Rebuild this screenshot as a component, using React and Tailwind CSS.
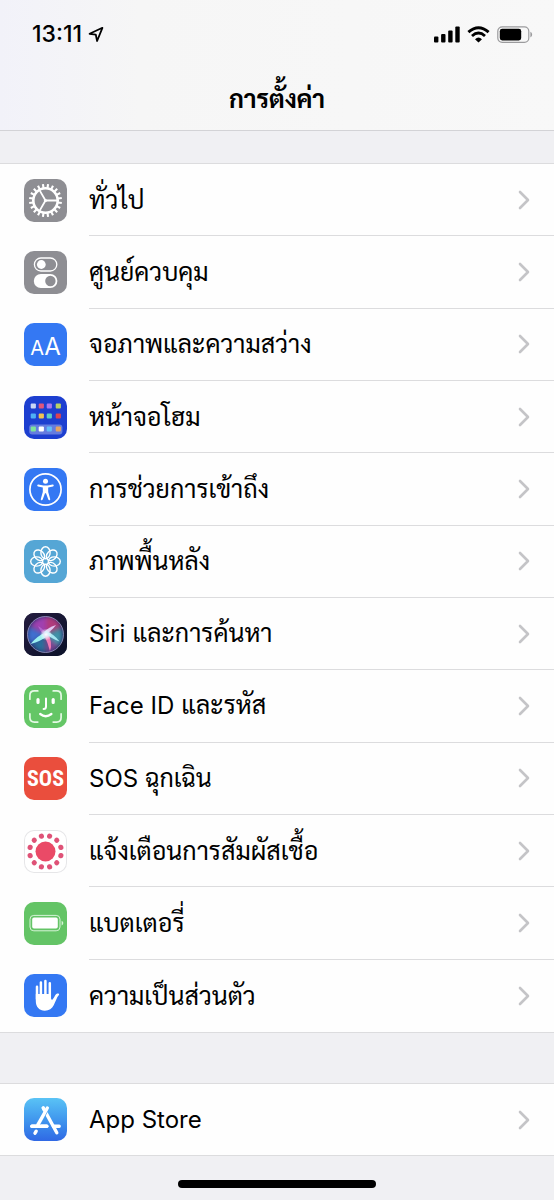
const EIGHT = [0, 45, 90, 135, 180, 225, 270, 315];
const TWELVE = Array.from({ length: 12 }, (_, i) => 15 + i * 30);
const TEETH = Array.from({ length: 20 }, (_, i) => i * 18);
const HOME_APPS = [
  [9, 10, '#c9d5f5'], [17, 10, '#e0567c'], [25, 10, '#a777f0'], [34, 10, '#b9d266'],
  [9, 20, '#4fb0f5'], [17, 20, '#f0c352'], [25, 20, '#5ccdc4'], [34, 20, '#dc4450'],
  [9, 33, '#7fe39a'], [17, 33, '#ffffff'], [25, 33, '#62bdf8'], [34, 33, '#e6a361'],
];

function Glyph({ children }) {
  return (
    <svg viewBox="0 0 43 43" className="size-full" aria-hidden="true" fill="none">
      {children}
    </svg>
  );
}

function GearIcon() {
  return (
    <Glyph>
      <g stroke="#fff" transform="translate(21.5 21.5)">
        <circle r="12.2" strokeWidth="2.6" />
        {TEETH.map((a) => (
          <path key={a} d="M0-12.5V-16.5" strokeWidth="2.1" transform={`rotate(${a + 9})`} />
        ))}
        <path d="M0 0H12M0 0L-6-10.4M0 0L-6 10.4" strokeWidth="1.8" />
        <circle r="1.6" fill="#fff" stroke="none" />
      </g>
    </Glyph>
  );
}

function TogglesIcon() {
  return (
    <Glyph>
      <rect x="10.4" y="7" width="22.4" height="13" rx="6.5" stroke="#fff" strokeWidth="1.3" />
      <circle cx="17.3" cy="13.5" r="4.4" fill="#fff" />
      <rect x="9.8" y="23" width="23.6" height="14" rx="7" fill="#fff" />
      <circle cx="26.4" cy="30" r="5.2" fill="#8e8e93" />
    </Glyph>
  );
}

function HomeScreenIcon() {
  return (
    <Glyph>
      <rect x="5.2" y="28.6" width="33.2" height="10" rx="3" fill="#fff" opacity=".32" />
      {HOME_APPS.map(([x, y, c]) => (
        <rect key={`${x}-${y}`} x={x - 2.3} y={y - 2.6} width="5.2" height="5.2" rx="1" fill={c} />
      ))}
    </Glyph>
  );
}

function AccessibilityIcon() {
  return (
    <Glyph>
      <circle cx="21.5" cy="21.5" r="15.6" stroke="#fff" strokeWidth="1.7" />
      <circle cx="21.5" cy="13.2" r="2.5" fill="#fff" />
      <path
        d="M14.4 16.5l5 .9h4.2l5-.9c1.3-.2 1.6 1.6.4 1.9l-4.8 1.1v4.6l2 6.9c.3 1.3-1.4 1.8-1.9.6l-2.3-6.3h-1l-2.3 6.3c-.5 1.2-2.2.7-1.9-.6l2-6.9v-4.6l-4.8-1.1c-1.2-.3-.9-2.1.4-1.9z"
        fill="#fff"
      />
    </Glyph>
  );
}

function FlowerIcon() {
  return (
    <Glyph>
      <g stroke="#fff" strokeWidth="1.4" transform="translate(21.5 21.5)">
        {EIGHT.map((a) => (
          <ellipse key={a} cy="-8.8" rx="4.6" ry="6" transform={`rotate(${a})`} />
        ))}
      </g>
    </Glyph>
  );
}

function SiriIcon() {
  return (
    <Glyph>
      <defs>
        <linearGradient id="siriBack" x1="0" y1="0" x2="1" y2="1">
          <stop offset="0" stopColor="#241c3f" />
          <stop offset="1" stopColor="#0a1128" />
        </linearGradient>
        <radialGradient id="siriGlow">
          <stop offset="0" stopColor="#fff" />
          <stop offset=".4" stopColor="#e6f2ff" stopOpacity=".85" />
          <stop offset="1" stopColor="#fff" stopOpacity="0" />
        </radialGradient>
        <filter id="siriBlur" x="-50%" y="-50%" width="200%" height="200%">
          <feGaussianBlur stdDeviation="2.2" />
        </filter>
        <filter id="siriSoft" x="-50%" y="-50%" width="200%" height="200%">
          <feGaussianBlur stdDeviation=".5" />
        </filter>
        <clipPath id="siriOrb">
          <circle cx="21.5" cy="21.5" r="18" />
        </clipPath>
      </defs>
      <rect width="43" height="43" fill="url(#siriBack)" />
      <g clipPath="url(#siriOrb)">
        <circle cx="21.5" cy="21.5" r="18" fill="#27306a" />
        <g filter="url(#siriBlur)">
          <path d="M21.5 21L6 13Q14 2 26 4Z" fill="#a03fb0" />
          <path d="M22 21L22 3Q34 4 37 14Z" fill="#b03a7c" />
          <path d="M21 21L5 14Q2 24 6 31Z" fill="#3f6fd0" />
          <path d="M22 22L37 15Q41 26 34 33Z" fill="#3f93a8" />
          <path d="M21 23L8 31Q14 39 21 39Z" fill="#2a6f9c" />
          <path d="M22 23L22 39Q31 39 34 32Z" fill="#7a4590" />
        </g>
        <g filter="url(#siriSoft)">
          <path d="M22 19Q13 23 6.5 31Q17 28 24 23Z" fill="#9cf0f0" />
          <path d="M19.5 21Q24 30 26 38Q29 29 23.5 20Z" fill="#f07ab4" />
          <path d="M20 22Q27 19 32 12Q25 14 20 19Z" fill="#e0c6f2" />
          <path d="M20 19.5Q28 26 35.5 28.5Q30 21 22 18Z" fill="#a5e6f2" />
          <path d="M23 22Q20 16 14 13Q16 18 20 22Z" fill="#c070d8" opacity=".7" />
        </g>
        <circle cx="22" cy="21.5" r="6" fill="url(#siriGlow)" />
      </g>
      <circle cx="21.5" cy="21.5" r="18" stroke="#a9a9d6" strokeOpacity=".8" strokeWidth=".9" />
    </Glyph>
  );
}

function FaceIcon() {
  return (
    <Glyph>
      <g stroke="#fff" strokeLinecap="round" strokeWidth="2">
        <g stroke="#e4f9e5" strokeWidth="1.7">
          <path d="M5.9 14.2V10.4Q5.9 5.9 10.4 5.9H13.8" />
          <path d="M37.1 14.2V10.4Q37.1 5.9 32.6 5.9H29.2" />
          <path d="M5.9 28.8V32.6Q5.9 37.1 10.4 37.1H13.8" />
          <path d="M37.1 28.8V32.6Q37.1 37.1 32.6 37.1H29.2" />
        </g>
        <path d="M14 14.5V17.4M29.2 14.5V17.4" strokeWidth="3.2" />
        <path d="M22 13.6V21.4Q22 23.9 19.6 23.9" />
        <path d="M16.2 29Q21.7 33.4 27.4 29" strokeWidth="2.3" />
      </g>
    </Glyph>
  );
}

function ExposureIcon() {
  return (
    <Glyph>
      <g fill="#ea4a67" transform="translate(21.5 21.5)">
        <circle r="10" />
        {TWELVE.map((a) => (
          <circle key={a} cy="-15.9" r="2.6" fill="#df5277" transform={`rotate(${a})`} />
        ))}
      </g>
    </Glyph>
  );
}

function BatteryIcon() {
  return (
    <Glyph>
      <rect x="6" y="13.4" width="30" height="15.4" rx="3.8" stroke="#d6f4d7" strokeWidth="1" />
      <rect x="8.2" y="15.6" width="25.6" height="11" rx="1.8" fill="#fff" />
      <path d="M37.6 18.8c2.2.8 2.2 3.8 0 4.6z" fill="#d6f4d7" />
    </Glyph>
  );
}

function HandIcon() {
  return (
    <Glyph>
      <path
        d="M13 12.8V25M16.9 8.6V25M21.4 7V25M25.8 9.2V25"
        stroke="#fff"
        strokeWidth="2.5"
        strokeLinecap="round"
      />
      <path
        d="M11.8 20V27C11.8 33 15.4 36.7 20.8 36.7C25.2 36.7 28 34.6 29.7 31.2L32.3 25.4Q33.2 22.9 34.9 21.1C35.7 20 34.4 19.2 33.2 19.6C31.9 20 31.1 21.4 30.3 22.9L28.6 25.6Q27.4 26.2 27 24.4V20Z"
        fill="#fff"
      />
    </Glyph>
  );
}

function StoreIcon() {
  return (
    <Glyph>
      <g stroke="#fff" strokeWidth="3.4" strokeLinecap="round">
        <path d="M19.3 10L32.8 34.8" />
        <path d="M7.8 28.3H22.8M29.4 28.3H35.2" />
        <path d="M12.2 33.2L11 35.2" />
      </g>
      <path d="M23.3 10L13.6 27.4" stroke="#4a9df0" strokeWidth="4.6" />
      <path d="M23.3 10L13.6 27.4" stroke="#fff" strokeWidth="3.4" strokeLinecap="round" />
      <path d="M19.3 10L20.6 12.4" stroke="#fff" strokeWidth="3.4" strokeLinecap="round" />
      <path d="M8 28.3H22.8" stroke="#fff" strokeWidth="3.4" strokeLinecap="round" />
    </Glyph>
  );
}

function TextSizeIcon() {
  return (
    <span className="flex size-full items-baseline justify-center pt-1 leading-10 text-white">
      <span className="text-xl leading-10">A</span>
      <span className="text-2xl leading-10">A</span>
    </span>
  );
}

function SosIcon() {
  return (
    <span className="flex size-full items-center justify-center font-['Roboto_Condensed','Roboto',sans-serif] text-[22px] font-bold text-white">
      SOS
    </span>
  );
}

const MAIN = [
  { thai: 'ทั่วไป', tile: 'bg-[#8e8e93]', Icon: GearIcon },
  { thai: 'ศูนย์ควบคุม', tile: 'bg-[#8e8e93]', Icon: TogglesIcon },
  { thai: 'จอภาพและความสว่าง', tile: 'bg-[#3478f3]', Icon: TextSizeIcon },
  { thai: 'หน้าจอโฮม', tile: 'bg-[#1d3fd0]', Icon: HomeScreenIcon },
  { thai: 'การช่วยการเข้าถึง', tile: 'bg-[#3478f3]', Icon: AccessibilityIcon },
  { thai: 'ภาพพื้นหลัง', tile: 'bg-[#55a6d5]', Icon: FlowerIcon },
  { latin: 'Siri', thai: ' และการค้นหา', tile: 'bg-[#151a35]', Icon: SiriIcon },
  { latin: 'Face ID', thai: ' และรหัส', tile: 'bg-[#64c666]', Icon: FaceIcon },
  { latin: 'SOS', thai: ' ฉุกเฉิน', tile: 'bg-[#ea4e3d]', Icon: SosIcon },
  { thai: 'แจ้งเตือนการสัมผัสเชื้อ', tile: 'bg-white ring-1 ring-inset ring-[#e6e6e8]', Icon: ExposureIcon },
  { thai: 'แบตเตอรี่', tile: 'bg-[#64c466]', Icon: BatteryIcon },
  { thai: 'ความเป็นส่วนตัว', tile: 'bg-[#3478f3]', Icon: HandIcon },
];

const STORE = [
  { latin: 'App Store', tile: 'bg-linear-to-b from-[#5ac3f5] to-[#3068e4]', Icon: StoreIcon },
];

function Row({ latin, thai, tile, Icon }) {
  return (
    <li className="group flex">
      <a href="#" className="flex flex-1 items-stretch gap-[22px] pl-6 text-black">
        <span className={`size-[43px] shrink-0 self-center overflow-hidden rounded-[10px] ${tile}`}>
          <Icon />
        </span>
        <span className="flex flex-1 items-center justify-between border-b border-[#dcdcde] pr-6 group-last:border-b-0">
          <span className="whitespace-pre text-[25px] leading-9">
            {latin && <span className="text-2xl leading-9">{latin}</span>}
            {thai}
          </span>
          <svg viewBox="0 0 12 20" className="h-5 w-3" fill="none" aria-hidden="true">
            <path d="M2 2L10 10L2 18" stroke="#c4c4c7" strokeWidth="2.6" strokeLinecap="round" strokeLinejoin="round" />
          </svg>
        </span>
      </a>
    </li>
  );
}

function Group({ items, size }) {
  return (
    <ul className={`grid auto-rows-fr border-y border-[#dcdcde] bg-[#fefefe] ${size}`}>
      {items.map((item) => (
        <Row key={item.thai ?? item.latin} {...item} />
      ))}
    </ul>
  );
}

function StatusBar() {
  return (
    <div className="flex h-[68px] items-center justify-between pl-8 pr-5">
      <div className="flex items-center gap-[6px]">
        <span className="text-[23px] font-medium leading-7">13:11</span>
        <svg viewBox="0 0 16 17" className="h-[17px] w-4" fill="none" aria-hidden="true">
          <path d="M14.4 1.8L1.6 7.8L7.8 8.7L9.1 15Z" stroke="#000" strokeWidth="1.8" strokeLinejoin="round" />
        </svg>
      </div>
      <div className="flex items-center gap-[7px]">
        <svg viewBox="0 0 26 17" className="h-[17px] w-[26px]" aria-hidden="true">
          <rect x="0" y="10.5" width="4.4" height="6" rx="1" />
          <rect x="7.1" y="8" width="4.4" height="8.5" rx="1" />
          <rect x="14.2" y="4.4" width="4.4" height="12.1" rx="1" />
          <rect x="21.3" y=".6" width="4.4" height="15.9" rx="1" />
        </svg>
        <svg viewBox="0 0 23 17" className="h-[17px] w-[23px]" fill="none" stroke="#000" strokeWidth="2.9" aria-hidden="true">
          <path d="M1.4 6.2Q11.5-2.8 21.6 6.2" />
          <path d="M5 10Q11.5 4.2 18 10" />
          <path d="M8 13.2Q11.5 10 15 13.2L11.5 16.6Z" fill="#000" stroke="none" />
        </svg>
        <svg viewBox="0 0 37 17" className="h-[17px] w-[37px]" fill="none" aria-hidden="true">
          <rect x=".8" y=".8" width="31" height="15.6" rx="4.4" stroke="#9b9b9d" strokeWidth="1.2" />
          <rect x="2.8" y="2.8" width="21.4" height="11.6" rx="2.4" fill="#000" />
          <path d="M33.4 5.8c2.3 1 2.3 4.6 0 5.6z" fill="#9b9b9d" />
        </svg>
      </div>
    </div>
  );
}

export default function App() {
  return (
    <div className="flex min-h-screen flex-col bg-[#f0f0f3] font-['Inter','Sarabun','Noto_Sans_Thai','Noto_Sans',sans-serif] text-black">
      <header className="border-b border-[#d3d3d6] bg-linear-to-r from-[#f2f2f9] via-[#f6f6f6] via-25% to-[#f8f8f8]">
        <StatusBar />
        <h1 className="flex h-[62px] items-center justify-center text-[25px] font-bold leading-9">การตั้งค่า</h1>
      </header>
      <main className="flex flex-col gap-[50px] pt-8">
        <Group items={MAIN} size="min-h-[870px]" />
        <Group items={STORE} size="min-h-[73px]" />
      </main>
      <footer className="mt-auto flex justify-center pb-3">
        <div className="h-2 w-[198px] rounded-full bg-black" />
      </footer>
    </div>
  );
}
